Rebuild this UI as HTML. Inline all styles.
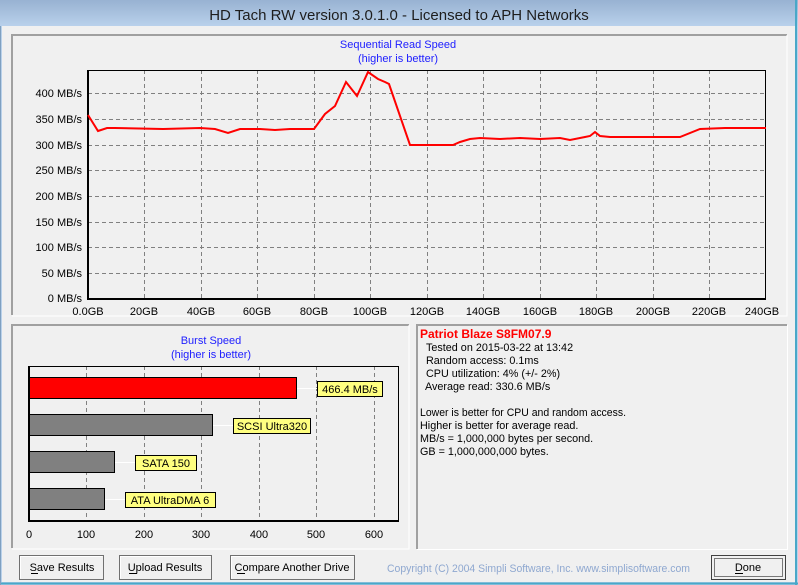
<!DOCTYPE html>
<html><head><meta charset="utf-8"><style>
html,body{margin:0;padding:0;width:798px;height:585px;overflow:hidden;background:#f0f0f0;}
svg{display:block;font-family:"Liberation Sans",Arial,sans-serif;}
</style></head><body>
<svg width="798" height="585" viewBox="0 0 798 585" xmlns="http://www.w3.org/2000/svg">
<defs><linearGradient id="tb" x1="0" y1="0" x2="0" y2="1"><stop offset="0" stop-color="#98b2d2"/><stop offset="1" stop-color="#bad2ec"/></linearGradient></defs>
<rect x="0" y="0" width="798" height="585" fill="#b9d1ea"/>
<rect x="0" y="0" width="798" height="27" fill="url(#tb)"/>
<text x="399" y="20" text-anchor="middle" font-size="15" fill="#1e1e1e">HD Tach RW version 3.0.1.0 - Licensed to APH Networks</text>
<rect x="2" y="26" width="793" height="556" fill="#f0f0f0"/>
<line x1="796" y1="0" x2="796" y2="585" stroke="#4aa8c8" stroke-width="2"/>
<line x1="0" y1="583.5" x2="798" y2="583.5" stroke="#4aa8c8" stroke-width="2"/>
<line x1="0.5" y1="26" x2="0.5" y2="585" stroke="#7fa0c0"/>

<path d="M12 315 V35 H787" fill="none" stroke="#a0a0a0" stroke-width="2"/>
<path d="M12 316 H787 V35" fill="none" stroke="#fff" stroke-width="1"/>
<text x="398" y="48" text-anchor="middle" font-size="11" fill="#2020ff">Sequential Read Speed</text>
<text x="398" y="62" text-anchor="middle" font-size="11" fill="#2020ff">(higher is better)</text>
<g stroke="#808080" stroke-dasharray="4,3" stroke-width="1">
<line x1="88" y1="93.5" x2="766" y2="93.5"/><line x1="88" y1="119.5" x2="766" y2="119.5"/><line x1="88" y1="145.5" x2="766" y2="145.5"/><line x1="88" y1="170.5" x2="766" y2="170.5"/><line x1="88" y1="196.5" x2="766" y2="196.5"/><line x1="88" y1="222.5" x2="766" y2="222.5"/><line x1="88" y1="247.5" x2="766" y2="247.5"/><line x1="88" y1="273.5" x2="766" y2="273.5"/>
<line x1="144.5" y1="70" x2="144.5" y2="299"/><line x1="201.5" y1="70" x2="201.5" y2="299"/><line x1="257.5" y1="70" x2="257.5" y2="299"/><line x1="314.5" y1="70" x2="314.5" y2="299"/><line x1="370.5" y1="70" x2="370.5" y2="299"/><line x1="427.5" y1="70" x2="427.5" y2="299"/><line x1="483.5" y1="70" x2="483.5" y2="299"/><line x1="540.5" y1="70" x2="540.5" y2="299"/><line x1="596.5" y1="70" x2="596.5" y2="299"/><line x1="653.5" y1="70" x2="653.5" y2="299"/><line x1="709.5" y1="70" x2="709.5" y2="299"/>
</g>
<rect x="88.5" y="70.5" width="677" height="228" fill="none" stroke="#000"/>
<line x1="88" y1="70" x2="88" y2="300" stroke="#000" stroke-width="2"/>
<line x1="87" y1="299" x2="766" y2="299" stroke="#000" stroke-width="2"/>
<g font-size="11" fill="#000" text-anchor="end">
<text x="82" y="97">400 MB/s</text><text x="82" y="123">350 MB/s</text><text x="82" y="149">300 MB/s</text><text x="82" y="174">250 MB/s</text><text x="82" y="200">200 MB/s</text><text x="82" y="226">150 MB/s</text><text x="82" y="251">100 MB/s</text><text x="82" y="277">50 MB/s</text><text x="82" y="302">0 MB/s</text>
</g>
<g font-size="11" fill="#000" text-anchor="middle">
<text x="88" y="315">0.0GB</text><text x="144" y="315">20GB</text><text x="201" y="315">40GB</text><text x="257" y="315">60GB</text><text x="314" y="315">80GB</text><text x="370" y="315">100GB</text><text x="427" y="315">120GB</text><text x="483" y="315">140GB</text><text x="540" y="315">160GB</text><text x="596" y="315">180GB</text><text x="653" y="315">200GB</text><text x="709" y="315">220GB</text><text x="762" y="315">240GB</text>
</g>
<polyline fill="none" stroke="#ff0000" stroke-width="2" points="88,115 98,131 107,128 115,128 163,129 200,128 215,129 228,133 240,129 260,129 275,130 290,129 314,129 325,114 335,106 346,82 357,96 368,72 378,79 385,82 389,84 410,145 453,145 460,142 470,139 480,138 500,139 520,138 540,139 560,138 570,140 585,137 590,136 595,132 600,136 610,137 640,137 680,137 700,129 725,128 766,128"/>

<path d="M12 548 V325 H409" fill="none" stroke="#a0a0a0" stroke-width="2"/>
<path d="M12 549 H409 V325" fill="none" stroke="#fff"/>
<text x="211" y="344" text-anchor="middle" font-size="11" fill="#2020ff">Burst Speed</text>
<text x="211" y="358" text-anchor="middle" font-size="11" fill="#2020ff">(higher is better)</text>
<g stroke="#808080" stroke-dasharray="4,3">
<line x1="86.5" y1="366" x2="86.5" y2="521"/><line x1="144.5" y1="366" x2="144.5" y2="521"/><line x1="201.5" y1="366" x2="201.5" y2="521"/><line x1="259.5" y1="366" x2="259.5" y2="521"/><line x1="316.5" y1="366" x2="316.5" y2="521"/><line x1="374.5" y1="366" x2="374.5" y2="521"/>
</g>
<g stroke="#fff"><line x1="296" y1="388.5" x2="317" y2="388.5"/><line x1="212" y1="425.5" x2="233" y2="425.5"/><line x1="114" y1="462.5" x2="135" y2="462.5"/><line x1="104" y1="499.5" x2="125" y2="499.5"/></g>
<rect x="29.5" y="366.5" width="369" height="154" fill="none" stroke="#000"/>
<line x1="29" y1="366" x2="29" y2="522" stroke="#000" stroke-width="2"/>
<line x1="28" y1="521" x2="399" y2="521" stroke="#000" stroke-width="2"/>
<rect x="29.5" y="377.5" width="267" height="21" fill="#ff0000" stroke="#000"/>
<rect x="29.5" y="414.5" width="183" height="21" fill="#808080" stroke="#000"/>
<rect x="29.5" y="451.5" width="85" height="21" fill="#808080" stroke="#000"/>
<rect x="29.5" y="488.5" width="75" height="21" fill="#808080" stroke="#000"/>
<g stroke="#000" fill="#ffff80">
<rect x="317.5" y="381.5" width="65" height="15"/><rect x="233.5" y="418.5" width="77" height="15"/><rect x="135.5" y="455.5" width="61" height="15"/><rect x="125.5" y="492.5" width="90" height="15"/>
</g>
<g font-size="11" fill="#000" text-anchor="middle">
<text x="350" y="393">466.4 MB/s</text><text x="272" y="430">SCSI Ultra320</text><text x="166" y="467">SATA 150</text><text x="170" y="504">ATA UltraDMA 6</text>
<text x="29" y="538">0</text><text x="86" y="538">100</text><text x="144" y="538">200</text><text x="201" y="538">300</text><text x="259" y="538">400</text><text x="316" y="538">500</text><text x="374" y="538">600</text>
</g>

<path d="M417 549 V325 H787" fill="none" stroke="#a0a0a0" stroke-width="2"/>
<path d="M417 549.5 H787.5 V325" fill="none" stroke="#fff"/>
<text x="420" y="338" font-size="12" font-weight="bold" fill="#ff0000">Patriot Blaze S8FM07.9</text>
<g font-size="10.8" fill="#000">
<text x="426" y="351">Tested on 2015-03-22 at 13:42</text>
<text x="426" y="364">Random access: 0.1ms</text>
<text x="426" y="377">CPU utilization: 4% (+/- 2%)</text>
<text x="425" y="390">Average read: 330.6 MB/s</text>
<text x="420" y="416" textLength="206" lengthAdjust="spacingAndGlyphs">Lower is better for CPU and random access.</text>
<text x="420" y="429">Higher is better for average read.</text>
<text x="420" y="442">MB/s = 1,000,000 bytes per second.</text>
<text x="420" y="455">GB = 1,000,000,000 bytes.</text>
</g>

<g font-size="11" fill="#000" text-anchor="middle">
<rect x="19.5" y="555.5" width="84" height="24" fill="#f0f0f0" stroke="#707070"/><path d="M20.5 578.5 V556.5 H102.5" stroke="#fff" fill="none"/>
<text x="62" y="571">Save Results</text><line x1="31" y1="573.5" x2="38" y2="573.5" stroke="#000"/>
<rect x="119.5" y="555.5" width="92" height="24" fill="#f0f0f0" stroke="#707070"/><path d="M120.5 578.5 V556.5 H210.5" stroke="#fff" fill="none"/>
<text x="165" y="571">Upload Results</text><line x1="129" y1="573.5" x2="137" y2="573.5" stroke="#000"/>
<rect x="230.5" y="555.5" width="124" height="24" fill="#f0f0f0" stroke="#707070"/><path d="M231.5 578.5 V556.5 H353.5" stroke="#fff" fill="none"/>
<text x="292" y="571">Compare Another Drive</text><line x1="237" y1="573.5" x2="245" y2="573.5" stroke="#000"/>
<rect x="711.5" y="555.5" width="74" height="24" fill="#f0f0f0" stroke="#404040"/>
<rect x="714.5" y="558.5" width="68" height="18" fill="none" stroke="#000" stroke-dasharray="1,1"/>
<text x="748" y="571">Done</text><line x1="735" y1="573.5" x2="743" y2="573.5" stroke="#000"/>
</g>
<text x="387" y="572" font-size="11" fill="#8fa8d0" textLength="303" lengthAdjust="spacingAndGlyphs">Copyright (C) 2004 Simpli Software, Inc. www.simplisoftware.com</text>
</svg>
</body></html>
